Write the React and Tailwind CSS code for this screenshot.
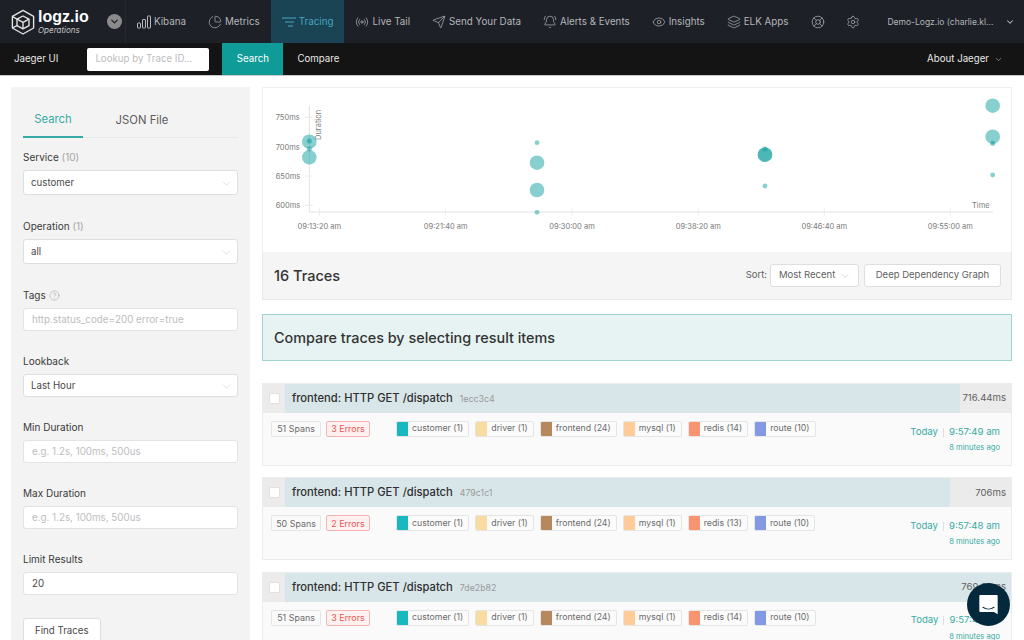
import {
  BellRing,
  ChartPie,
  ChevronDown,
  CircleHelp,
  Eye,
  Layers,
  LifeBuoy,
  Radio,
  Send,
  Settings,
} from "lucide-react";

const KibanaIcon = ({ className }) => (
  <svg viewBox="0 0 14 14" fill="none" stroke="currentColor" strokeWidth="1" className={className}>
    <rect x="0.5" y="8" width="3" height="5" rx="0.5" />
    <rect x="5.5" y="4.5" width="3" height="8.5" rx="0.5" />
    <rect x="10.5" y="1" width="3" height="12" rx="0.5" />
  </svg>
);

const TracingIcon = ({ className }) => (
  <svg viewBox="0 0 14 14" fill="none" stroke="currentColor" strokeWidth="1.2" className={className}>
    <path d="M0 3h14M3 7h9M6 11h5" />
  </svg>
);

const NAV = [
  { label: "Kibana", icon: KibanaIcon },
  { label: "Metrics", icon: ChartPie },
  { label: "Tracing", icon: TracingIcon, active: true },
  { label: "Live Tail", icon: Radio },
  { label: "Send Your Data", icon: Send },
  { label: "Alerts & Events", icon: BellRing },
  { label: "Insights", icon: Eye },
  { label: "ELK Apps", icon: Layers },
];

const SERVICES = [
  { name: "customer", color: "bg-[#17b8be]" },
  { name: "driver", color: "bg-[#f8dca1]" },
  { name: "frontend", color: "bg-[#b7885e]" },
  { name: "mysql", color: "bg-[#ffcb99]" },
  { name: "redis", color: "bg-[#f89570]" },
  { name: "route", color: "bg-[#829ae3]" },
];

const TRACES = [
  { id: "1ecc3c4", dur: "716.44ms", bar: "w-[93%]", spans: 51, errors: 3, time: "9:57:49 am", counts: [1, 1, 24, 1, 14, 10] },
  { id: "479c1c1", dur: "706ms", bar: "w-[91.6%]", spans: 50, errors: 2, time: "9:57:48 am", counts: [1, 1, 24, 1, 13, 10] },
  { id: "7de2b82", dur: "769.66ms", bar: "w-full", spans: 51, errors: 3, time: "9:57:47 am", counts: [1, 1, 24, 1, 14, 10] },
];

// x, y, radius, opacity
const DOTS = [
  [46.3, 53.7, 7.3, 0.5], [46.3, 53, 2.5, 0.6], [46.3, 61, 2.5, 0.5], [46.3, 69.3, 7.3, 0.5],
  [274, 54.7, 2.4, 0.5], [274, 74.7, 7.3, 0.5], [274, 102, 7.3, 0.5], [274, 124.3, 2.4, 0.5],
  [502, 66.7, 7.3, 0.5], [502, 66.7, 7.3, 0.5], [502, 61, 2.5, 0.5], [502, 98, 2.4, 0.5],
  [729.7, 17.7, 7.3, 0.5], [729.7, 48.7, 7.3, 0.5], [729.7, 55.3, 2.5, 0.6], [729.7, 87, 2.4, 0.5],
];

const Logo = () => (
  <svg viewBox="0 0 26 28" fill="none" stroke="#e4e4e4" strokeWidth="1.5" strokeLinejoin="round" className="h-[26px] w-[24px] shrink-0">
    <path d="M13 1.500 24.500 8v12.500L13 27 1.500 20.500V8z" />
    <path d="M6.500 11 13 7.500 19.500 11v7L13 21.500 6.500 18z" />
    <path d="M6.500 11 13 14.500 19.500 11M13 14.500v7M1.500 8l5 3M1.500 20.500l5-2.500" />
  </svg>
);

const Field = ({ label, hint, children, className = "" }) => (
  <div className={className}>
    <div className="mb-[4px] text-[10px] leading-[18px] text-[#3a3a3a]">
      {label} {hint && <span className="text-[#a6a6a6]">{hint}</span>}
    </div>
    {children}
  </div>
);

const SelectBox = ({ value, tall }) => (
  <div
    className={`flex items-center justify-between rounded-[3px] border border-[#dedede] bg-white pt-[2px] pr-[4px] pl-[7px] text-[9.7px] text-[#4a4a4a] ${tall ? "h-[25px]" : "h-[23px]"}`}
  >
    {value}
    <ChevronDown className="h-[13px] w-[13px] text-[#c4c4c4]" strokeWidth={1} />
  </div>
);

const InputBox = ({ placeholder, value }) => (
  <div className="flex h-[23px] items-center rounded-[3px] border border-[#e3e3e3] bg-white pt-[2px] pl-[8px] text-[9.8px]">
    {value ? <span className="text-[#4a4a4a]">{value}</span> : <span className="text-[#bdbdbd]">{placeholder}</span>}
  </div>
);

const Sidebar = () => (
  <aside className="w-[239px] shrink-0 bg-[#f3f3f3] px-[12px] pt-[16px]">
    <div className="flex h-[35px] border-b border-[#e8e8e8] text-[11.3px]">
      <div className="-mb-px flex w-[60px] items-center justify-center border-b-2 border-[#38aaa5] text-[#38aaa5]">Search</div>
      <div className="ml-[24px] flex w-[70px] items-center justify-center text-[#5c5c5c]">JSON File</div>
    </div>
    <Field label="Service" hint="(10)" className="mt-[10px]">
      <SelectBox value="customer" tall />
    </Field>
    <Field label="Operation" hint="(1)" className="mt-[22px]">
      <SelectBox value="all" tall />
    </Field>
    <Field
      label={
        <span className="inline-flex items-center gap-[3px]">
          Tags <CircleHelp className="h-[11px] w-[11px] text-[#a0a0a0]" strokeWidth={1.2} />
        </span>
      }
      className="mt-[22px]"
    >
      <InputBox placeholder="http.status_code=200 error=true" />
    </Field>
    <Field label="Lookback" className="mt-[21px]">
      <SelectBox value="Last Hour" />
    </Field>
    <Field label="Min Duration" className="mt-[21px]">
      <InputBox placeholder="e.g. 1.2s, 100ms, 500us" />
    </Field>
    <Field label="Max Duration" className="mt-[21px]">
      <InputBox placeholder="e.g. 1.2s, 100ms, 500us" />
    </Field>
    <Field label="Limit Results" className="mt-[21px]">
      <InputBox value="20" />
    </Field>
    <div className="mt-[23px] inline-flex h-[26px] items-center rounded-[3px] border border-[#dedede] bg-white px-[11px] text-[9.7px] text-[#4a4a4a]">
      Find Traces
    </div>
  </aside>
);

const Chart = () => (
  <div className="h-[165px] border border-b-0 border-[#efefef] bg-white">
    <svg viewBox="0 0 748 164" className="block h-[164px] w-[748px]" fontFamily="Inter, sans-serif" fontSize="7.5" fill="#7a7a7a">
      <path d="M46.300 17.700V124H730" fill="none" stroke="#e3e3e3" />
      <path d="M42 29.300h8M42 58.700h8M42 88h8M42 117.300h8M56.300 120v7.500M182.700 120v7.500M309 120v7.500M435.300 120v7.500M561.300 120v7.500M687.300 120v7.500" stroke="#ececec" />
      {[["750ms", 29.3], ["700ms", 58.7], ["650ms", 88], ["600ms", 117.3]].map(([t, y]) => (
        <text key={t} x="12.7" y={y + 3}>{t}</text>
      ))}
      {[["09:13:20 am", 56.3], ["09:21:40 am", 182.7], ["09:30:00 am", 309], ["09:38:20 am", 435.3], ["09:46:40 am", 561.3], ["09:55:00 am", 687.3]].map(([t, x]) => (
        <text key={t} x={x} y="140.500" textAnchor="middle">{t}</text>
      ))}
      <text transform="translate(58 52) rotate(-90)">Duration</text>
      <text x="709" y="120">Time</text>
      {DOTS.map(([x, y, r, o], i) => (
        <circle key={i} cx={x} cy={y} r={r} fill="#12a0a0" fillOpacity={o} />
      ))}
    </svg>
  </div>
);

const Tag = ({ name, color, count }) => (
  <div className="flex h-[16px] items-center overflow-hidden rounded-[2px] border border-[#e5e5e5] bg-[#fbfbfb] pr-[5px] text-[8.75px] text-[#6b6b6b]">
    <span className={`h-full w-[11px] ${color}`} />
    <span className="ml-[4px]">
      {name} ({count})
    </span>
  </div>
);

const TraceCard = ({ trace }) => (
  <div className="h-[83px] border border-[#ececec] bg-[#fafafa]">
    <div className="flex h-[29px] bg-[#ebebeb]">
      <div className="flex w-[22px] shrink-0 items-center justify-center">
        <span className="h-[11px] w-[11px] rounded-[2px] border border-[#e0e0e0] bg-white" />
      </div>
      <div className="relative min-w-0 flex-1">
        <div className={`absolute inset-y-0 left-0 bg-[#d8e6e9] ${trace.bar}`} />
        <div className="relative flex h-full items-center justify-between pr-[5px] pl-[7px]">
          <span className="flex items-baseline gap-[7px]">
            <span className="text-[11.2px] font-medium text-[#2f2f2f]">frontend: HTTP GET /dispatch</span>
            <span className="text-[8.8px] text-[#9a9a9a]">{trace.id}</span>
          </span>
          <span className="text-[9.6px] text-[#5f5f5f]">{trace.dur}</span>
        </div>
      </div>
    </div>
    <div className="flex pt-[8px] pr-[11px] pl-[8px]">
      <div className="flex h-[16px] gap-[5px] text-[8.9px]">
        <span className="flex w-[50px] items-center justify-center rounded-[2px] border border-[#e5e5e5] text-[#6b6b6b]">{trace.spans} Spans</span>
        <span className="flex w-[44px] items-center justify-center rounded-[2px] border border-[#f5b5b5] bg-[#fff1f0] text-[#ef5350]">{trace.errors} Errors</span>
      </div>
      <div className="ml-[26px] flex gap-[6px]">
        {SERVICES.map((s, i) => (
          <Tag key={s.name} name={s.name} color={s.color} count={trace.counts[i]} />
        ))}
      </div>
      <div className="ml-auto text-right text-[#38aaa5]">
        <div className="flex h-[20px] items-center pt-[2px] text-[9.6px]">
          Today <span className="mx-[5px] h-[9px] w-px bg-[#dedede]" /> {trace.time}
        </div>
        <div className="mt-[1px] text-[7.6px] leading-[12px]">8 minutes ago</div>
      </div>
    </div>
  </div>
);

export default function App() {
  return (
    <div className="h-[640px] w-[1024px] overflow-hidden bg-white font-['Inter',sans-serif]">
      {/* Logz.io bar */}
      <header className="flex h-[43px] items-center whitespace-nowrap bg-[#1d2027] text-[9.8px] text-[#b4b6b9]">
        <div className="flex h-full w-[126px] shrink-0 items-center border-r border-[#262930] pl-[11px]">
          <Logo />
          <div className="ml-[3px] leading-none">
            <div className="font-['Liberation_Sans',sans-serif] text-[16px] font-bold text-white">logz.io</div>
            <div className="mt-px text-[8px] italic text-[#c4c4c4]">Operations</div>
          </div>
          <span className="ml-[18px] flex h-[15px] w-[15px] items-center justify-center rounded-full bg-[#8b8b8b]">
            <ChevronDown className="h-[11px] w-[11px] text-[#1d2027]" strokeWidth={3} />
          </span>
        </div>
        {NAV.map(({ label, icon: Icon, active }) => (
          <div
            key={label}
            className={`flex h-full shrink-0 items-center gap-[3px] px-[11px] pt-[1px] ${active ? "bg-[#1a4453] text-[#47a5c4]" : ""}`}
          >
            <Icon className="h-[14px] w-[14px]" strokeWidth={1.2} />
            {label}
          </div>
        ))}
        <LifeBuoy className="ml-[12px] h-[14px] w-[14px] shrink-0" strokeWidth={1.2} />
        <Settings className="ml-[21px] h-[14px] w-[14px] shrink-0" strokeWidth={1.2} />
        <span className="ml-[27px] pt-[1px] text-[8.5px]">Demo-Logz.io (charlie.kl...</span>
        <ChevronDown className="ml-[12px] h-[10px] w-[10px] shrink-0" strokeWidth={2.5} />
      </header>

      {/* Jaeger bar */}
      <nav className="flex h-[33px] items-center border-b border-[#c9c9c9] bg-[#141414] text-[9.7px] text-[#e8e8e8]">
        <span className="ml-[14px]">Jaeger UI</span>
        <div className="ml-[29px] flex h-[23px] w-[122px] items-center rounded-[2px] bg-white pl-[8px] text-[#bdbdbd]">Lookup by Trace ID...</div>
        <div className="ml-[13px] flex h-full w-[61px] items-center justify-center bg-[#0f9b98] text-white">Search</div>
        <span className="ml-[14px]">Compare</span>
        <span className="ml-auto">About Jaeger</span>
        <ChevronDown className="mr-[21px] ml-[5px] h-[9px] w-[9px] text-[#9a9a9a]" />
      </nav>

      {/* Page body */}
      <main className="flex gap-[12px] pt-[11px] pl-[11px]">
        <Sidebar />
        <section className="w-[750px] shrink-0">
          <Chart />
          <div className="flex h-[48px] items-center justify-between border border-t-0 border-[#e8e8e8] bg-[#f5f5f5] pr-[10px] pl-[11px]">
            <span className="text-[14.5px] font-medium text-[#333]">16 Traces</span>
            <div className="flex items-center text-[9.5px] text-[#5f5f5f]">
              <span>Sort:</span>
              <div className="ml-[3px] flex h-[23px] w-[89px] items-center justify-between rounded-[3px] border border-[#dedede] bg-white pr-[7px] pl-[8px]">
                Most Recent
                <ChevronDown className="h-[12px] w-[12px] text-[#b0b0b0]" strokeWidth={1} />
              </div>
              <div className="ml-[5px] flex h-[23px] w-[137px] items-center justify-center rounded-[3px] border border-[#dedede] bg-white">
                Deep Dependency Graph
              </div>
            </div>
          </div>
          <div className="mt-[14px] flex h-[47px] items-center border border-[#9fd3cf] bg-[#e6f3f2] pl-[11px] text-[14.4px] font-medium text-[#333]">
            Compare traces by selecting result items
          </div>
          <div className="mt-[22px] flex flex-col gap-[11.3px]">
            {TRACES.map((t) => (
              <TraceCard key={t.id} trace={t} />
            ))}
          </div>
        </section>
      </main>

      {/* Chat launcher */}
      <div className="absolute top-[583px] left-[967px] flex h-[43px] w-[43px] items-center justify-center rounded-full bg-[#04293d]">
        <svg viewBox="0 0 22 24" className="h-[22px] w-[21px]">
          <path d="M2 1h18a1 1 0 0 1 1 1v20l-4-2.500H2a1 1 0 0 1-1-1V2a1 1 0 0 1 1-1z" fill="#fff" />
          <path d="M5 14.500c3.500 2.500 8.500 2.500 12 0" fill="none" stroke="#04293d" strokeWidth="1.200" strokeLinecap="round" />
        </svg>
      </div>
    </div>
  );
}
